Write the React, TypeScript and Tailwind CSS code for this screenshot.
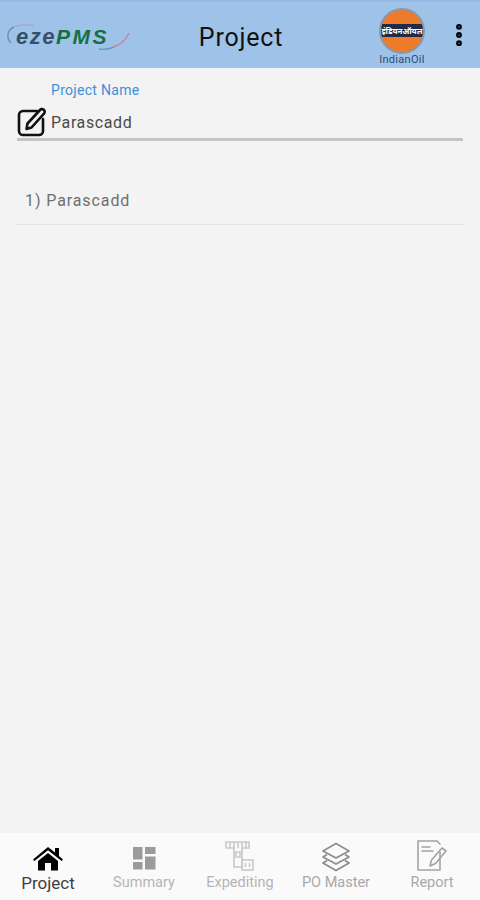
import { MoreVertical } from "lucide-react";

const font = "font-['Roboto',sans-serif]";

const Logo = () => (
  <div className="relative w-[124px] h-[28px] mt-[3px]">
    <svg viewBox="0 0 124 28" className="absolute inset-0 w-full h-full">
      <path d="M7 4 C0 7 -1 15 4 20" fill="none" stroke="#7a8fa8" strokeWidth="1.4" />
      <path d="M7 4 C12 2 20 1 27 3" fill="none" stroke="#a9a0b4" strokeWidth="1" />
      <path d="M106 24 C113 22 119 17 122 10" fill="none" stroke="#c08aa0" strokeWidth="1.6" />
      <path d="M92 26 C98 27 103 26 107 24" fill="none" stroke="#5f9ea8" strokeWidth="1.4" />
    </svg>
    <span className="absolute left-[9px] top-[1px] text-[22px] leading-[26px] italic font-bold tracking-[1.5px] text-[#35506b] font-['Liberation_Sans',sans-serif]">
      eze<span className="text-[#14703f] text-[21px] tracking-[2.5px]">PMS</span>
    </span>
  </div>
);

const IndianOil = () => (
  <div className="flex flex-col items-center w-[50px]">
    <div className="relative w-[46px] h-[46px] rounded-full bg-[#ee7b2a] border-2 border-[#8a99a8] overflow-hidden flex items-center justify-center">
      <div className="w-full h-[13px] bg-[#222b45] flex items-center justify-center">
        <span className="text-[8px] leading-none font-bold text-white font-['Noto_Sans_CJK_SC','Noto_Sans',sans-serif]">इंडियनऑयल</span>
      </div>
    </div>
    <span className={`${font} text-[11px] leading-[11px] tracking-[0.3px] text-[#2b4a78]`}>IndianOil</span>
  </div>
);

const EditIcon = () => (
  <svg viewBox="0 0 30 30" className="w-[30px] h-[30px]" fill="none" stroke="#111" strokeWidth="2.6" strokeLinejoin="round" strokeLinecap="round">
    <path d="M20 4 H6 a4 4 0 0 0 -4 4 V24 a4 4 0 0 0 4 4 H22 a4 4 0 0 0 4 -4 V12" />
    <path d="M9.5 22 L10.5 16.5 L23 3 a2 2 0 0 1 4 3.6 L14.5 20.5 Z" />
  </svg>
);

const HomeIcon = () => (
  <svg viewBox="0 0 30 26" className="w-[30px] h-[26px]" fill="#000">
    <path d="M15 1 L22 6.5 V2 H26 V10 L30 13.5 L28.6 15 L15 4.2 L1.4 15 L0 13.5 Z" />
    <path d="M5 15 L15 7 L25 15 V24.5 H18 V17 H12 V24.5 H5 Z" />
  </svg>
);

const SummaryIcon = () => (
  <svg viewBox="0 0 24 24" className="w-[24px] h-[24px] mb-[2px]" fill="#9b9b9b">
    <rect x="1" y="1" width="9.5" height="12.5" />
    <rect x="13" y="1" width="10.5" height="7" />
    <rect x="1" y="16" width="9.5" height="7.5" />
    <rect x="13" y="10.5" width="10.5" height="13" />
  </svg>
);

const ExpeditingIcon = () => (
  <svg viewBox="0 0 30 32" className="w-[30px] h-[32px]" fill="none" stroke="#c9c9c9" strokeWidth="1.6">
    <path d="M1 2 H24 V8 H17 V27 H9 V8 H1 Z" />
    <path d="M5 2 V8 M9 2 V8 M13 2 V8 M17 2 V8 M21 2 V8" />
    <rect x="17" y="20" width="11" height="10" />
    <path d="M20.5 23 V27 M24.5 23 V27" />
    <path d="M11 12 H15 V17 H11 Z" />
  </svg>
);

const LayersIcon = () => (
  <svg viewBox="0 0 30 30" className="w-[30px] h-[30px]" fill="none" stroke="#8f8f8f" strokeWidth="1.8" strokeLinejoin="round">
    <path d="M15 1.5 L28 9 L15 16 L2 9 Z" />
    <path d="M6 12.5 L2 15 L15 22 L28 15 L24 12.5" />
    <path d="M6 18.5 L2 21 L15 28.5 L28 21 L24 18.5" />
  </svg>
);

const ReportIcon = () => (
  <svg viewBox="0 0 30 32" className="w-[30px] h-[32px]" fill="none" stroke="#a3a3a3" strokeWidth="1.6" strokeLinejoin="round" strokeLinecap="round">
    <path d="M23 12 V30 H1 V1 H20 L23 4" />
    <path d="M5 7 H13 M5 11 H16" />
    <path d="M13 26 L14.5 20 L25 8 L29 11 L18.5 23.5 Z" />
  </svg>
);

const tabs = [
  { label: "Project", icon: <HomeIcon />, cls: "text-[#3f3f3f] text-[17px]" },
  { label: "Summary", icon: <SummaryIcon />, cls: "text-[#b4b4b4] text-[14.5px]" },
  { label: "Expediting", icon: <ExpeditingIcon />, cls: "text-[#b4b4b4] text-[14.5px]" },
  { label: "PO Master", icon: <LayersIcon />, cls: "text-[#a8a8a8] text-[14.5px]" },
  { label: "Report", icon: <ReportIcon />, cls: "text-[#a8a8a8] text-[14.5px]" },
];

export default function App() {
  return (
    <div className={`${font} w-[480px] h-[900px] flex flex-col bg-[#f3f3f3]`}>
      {/* Header */}
      <header className="h-[68px] shrink-0 bg-[#9fc3e8] border-t-2 border-[#93b9e4] flex items-center pl-[7px]">
        <Logo />
        <h1 className="w-[220px] mt-[5px] text-center text-[25px] tracking-[0.8px] text-[#111]">Project</h1>
        <div className="ml-[26px] mt-[2px]">
          <IndianOil />
        </div>
        <MoreVertical className="w-[28px] h-[28px] ml-[18px] text-black" strokeWidth={3} />
      </header>

      {/* Project picker */}
      <div className="px-[17px] pt-[14px]">
        <div className="pl-[34px] text-[14px] leading-[16px] tracking-[0.3px] text-[#3f8fd6]">Project Name</div>
        <div className="flex items-center h-[41px] mt-[2px] border-b-[3px] border-[#c4c4c4] pt-[6px]">
          <EditIcon />
          <span className="ml-[4px] mt-[2px] text-[16px] tracking-[0.6px] text-[#4a4a4a]">Parascadd</span>
        </div>
      </div>

      {/* List */}
      <div className="mx-[15px] mt-[45px] pl-[10px] h-[39px] border-b border-[#e4e4e4] text-[16px] leading-[30px] tracking-[0.9px] text-[#6f6f6f]">
        1) Parascadd
      </div>

      {/* Bottom tabs */}
      <nav className="mt-auto h-[67px] bg-[#fafafa] grid grid-cols-5">
        {tabs.map((t) => (
          <div key={t.label} className="flex flex-col items-center">
            <div className="h-[39px] flex items-end justify-center">{t.icon}</div>
            <span className={`${t.cls} mt-[1px] leading-[20px] whitespace-nowrap`}>{t.label}</span>
          </div>
        ))}
      </nav>
    </div>
  );
}
